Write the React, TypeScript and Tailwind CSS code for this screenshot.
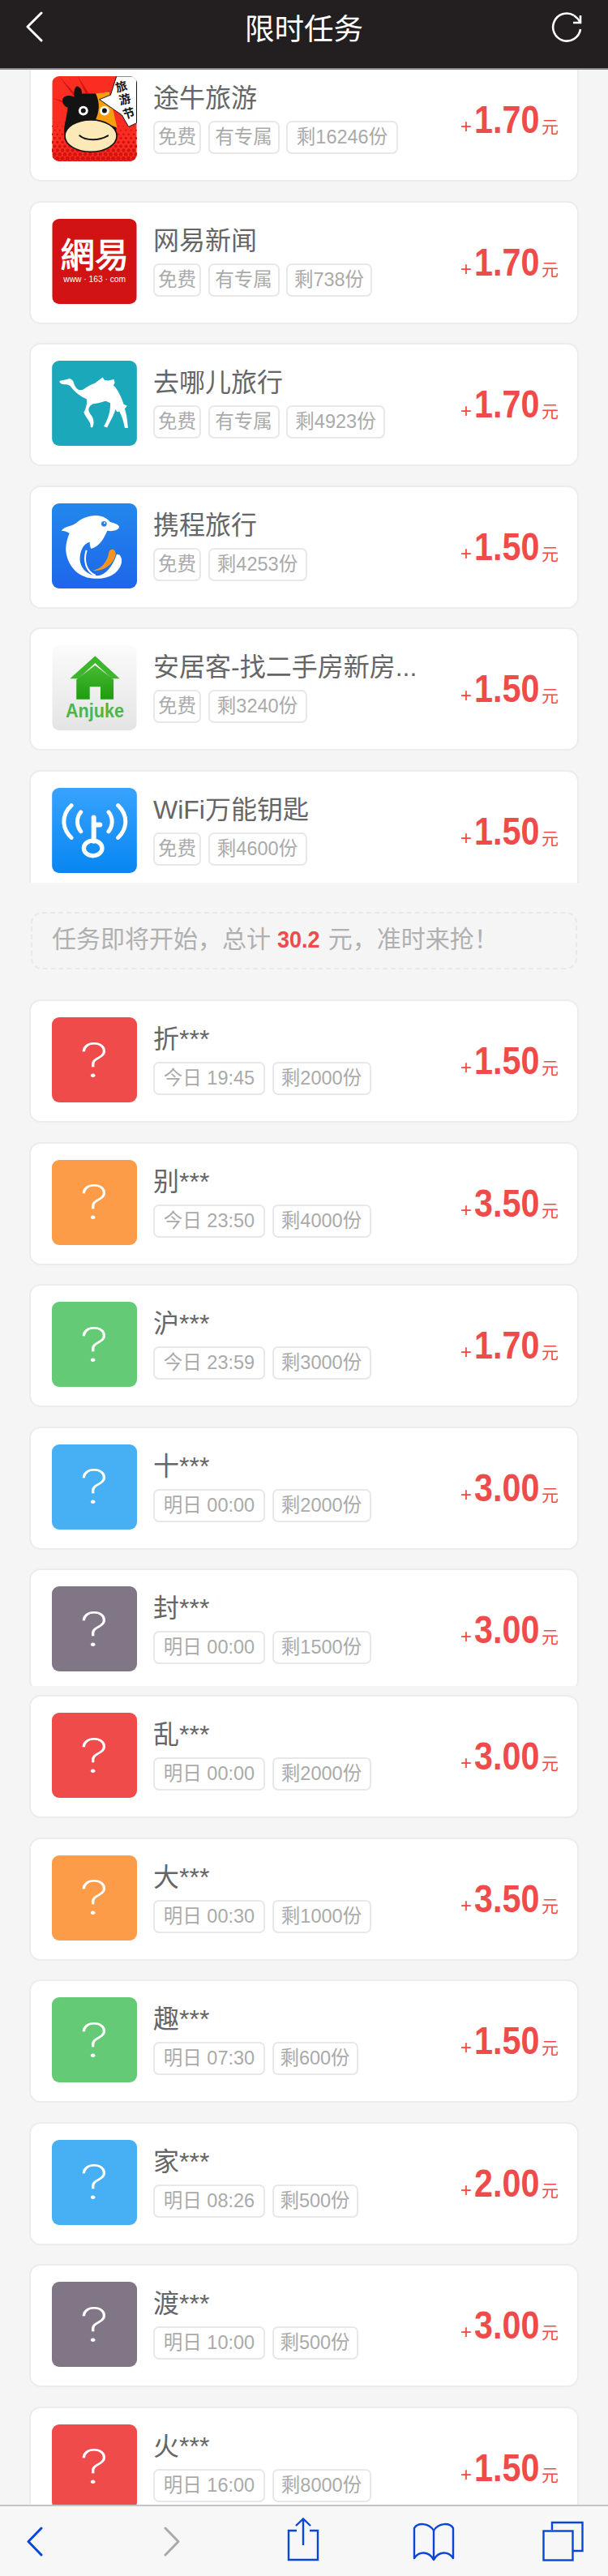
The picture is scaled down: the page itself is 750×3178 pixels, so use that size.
type Task = {
  name: string;
  logo?: string;
  color?: string;
  tags: string[];
  remain: string;
  price: string;
};

const hotTasks: Task[] = [
  { name: "途牛旅游", logo: "tuniu", tags: ["免费", "有专属"], remain: "16246", price: "1.70" },
  { name: "网易新闻", logo: "netease", tags: ["免费", "有专属"], remain: "738", price: "1.70" },
  { name: "去哪儿旅行", logo: "qunar", tags: ["免费", "有专属"], remain: "4923", price: "1.70" },
  { name: "携程旅行", logo: "ctrip", tags: ["免费"], remain: "4253", price: "1.50" },
  { name: "安居客-找二手房新房...", logo: "anjuke", tags: ["免费"], remain: "3240", price: "1.50" },
  { name: "WiFi万能钥匙", logo: "wifi", tags: ["免费"], remain: "4600", price: "1.50" },
];

const soonTasks: Task[] = [
  { name: "折***", color: "bg-[#ef4b4b]", tags: ["今日 19:45"], remain: "2000", price: "1.50" },
  { name: "别***", color: "bg-[#fd9c48]", tags: ["今日 23:50"], remain: "4000", price: "3.50" },
  { name: "沪***", color: "bg-[#65ca75]", tags: ["今日 23:59"], remain: "3000", price: "1.70" },
  { name: "十***", color: "bg-[#47aff3]", tags: ["明日 00:00"], remain: "2000", price: "3.00" },
  { name: "封***", color: "bg-[#807686]", tags: ["明日 00:00"], remain: "1500", price: "3.00" },
];

const laterTasks: Task[] = [
  { name: "乱***", color: "bg-[#ef4b4b]", tags: ["明日 00:00"], remain: "2000", price: "3.00" },
  { name: "大***", color: "bg-[#fd9c48]", tags: ["明日 00:30"], remain: "1000", price: "3.50" },
  { name: "趣***", color: "bg-[#65ca75]", tags: ["明日 07:30"], remain: "600", price: "1.50" },
  { name: "家***", color: "bg-[#47aff3]", tags: ["明日 08:26"], remain: "500", price: "2.00" },
  { name: "渡***", color: "bg-[#807686]", tags: ["明日 10:00"], remain: "500", price: "3.00" },
  { name: "火***", color: "bg-[#ef4b4b]", tags: ["明日 16:00"], remain: "8000", price: "1.50" },
];

function TuniuLogo() {
  const dots: { x: number; y: number; r: number }[] = [];
  for (let row = 0; row < 12; row++) {
    for (let col = 0; col < 18; col++) {
      const y = 200 + row * 15;
      const x = 100 + col * 19 + (row % 2) * 9;
      dots.push({ x, y, r: 1 + row * 0.7 });
    }
  }
  return (
    <svg viewBox="100 43 315 318" className="w-full h-full">
      <rect x="100" y="43" width="315" height="318" fill="#fa2d23" />
      <g fill="#d0140f">
        <path d="M125 43L200 125L190 130ZM195 43L235 105L225 108ZM100 125L150 138L148 145Z" />
        {dots.map((d, i) => (
          <circle key={i} cx={d.x} cy={d.y} r={d.r} />
        ))}
      </g>
      <path d="M192 80C208 85 212 98 210 108L290 108L312 98L340 240L300 300C280 325 190 330 165 300L145 262C140 240 150 215 158 160C140 155 130 130 145 120C160 112 175 118 182 120C180 100 182 88 192 80Z" fill="#141313" />
      <path d="M262 107L290 105L312 100L342 235L262 205C275 175 280 145 262 107Z" fill="#fb9f11" />
      <path d="M340 43L415 43L415 218L385 232L360 188L276 130L318 113Z" fill="#fff" stroke="#141313" strokeWidth="3" />
      <ellipse cx="244" cy="266" rx="97" ry="60" fill="#fde8b8" stroke="#141313" strokeWidth="5" />
      <path d="M202 265C225 285 275 285 308 265" fill="none" stroke="#141313" strokeWidth="6" strokeLinecap="round" />
      <circle cx="216" cy="172" r="18" fill="#fff" />
      <circle cx="216" cy="172" r="9" fill="#141313" />
      <circle cx="295" cy="172" r="18" fill="#fff" />
      <circle cx="295" cy="172" r="9" fill="#141313" />
      <g fill="#141313" fontSize="44" fontFamily="'Noto Sans CJK SC', sans-serif" fontWeight="700" textAnchor="middle">
        <text x="0" y="0" transform="translate(362 97) rotate(-15)">旅</text>
        <text x="0" y="0" transform="translate(375 145) rotate(-15)">游</text>
        <text x="0" y="0" transform="translate(390 197) rotate(-15)">节</text>
      </g>
    </svg>
  );
}

function NeteaseLogo() {
  return (
    <svg viewBox="100 30 315 318" className="w-full h-full">
      <rect x="100" y="30" width="315" height="318" fill="#d11313" />
      <text x="258" y="212" fill="#fff" stroke="#fff" strokeWidth="3" fontSize="128" textAnchor="middle" fontFamily="'Noto Sans CJK TC', sans-serif">網易</text>
      <text x="258" y="267" fill="#fff" fontSize="31" textAnchor="middle" fontFamily="'Liberation Sans', sans-serif">www · 163 · com</text>
    </svg>
  );
}

function QunarLogo() {
  return (
    <svg viewBox="100 48 315 316" className="w-full h-full">
      <rect x="100" y="48" width="315" height="316" fill="#1aa8ba" />
      <path d="M128 123C140 120 150 120 160 116C172 113 178 120 182 134C188 152 198 160 212 156C225 150 238 138 258 132L272 122L288 110L295 120L308 122L330 117L333 130L328 140C345 155 358 185 366 210L379 216L370 226C378 250 380 275 382 298L370 298C366 272 358 252 350 236C345 240 340 240 336 228C328 255 312 280 305 296L292 292C305 270 318 240 316 205L300 198C280 203 268 208 252 208L242 215C235 225 232 232 245 250C255 262 258 280 250 296L243 295C246 275 228 265 218 240C226 225 232 205 228 190C208 182 185 165 170 145C165 137 155 136 145 136C135 134 128 132 128 123Z" fill="#fff" />
    </svg>
  );
}

function CtripLogo() {
  return (
    <svg viewBox="100 67 315 315" className="w-full h-full">
      <defs>
        <linearGradient id="ctripBg" x1="0" y1="0" x2="0" y2="1">
          <stop offset="0" stopColor="#2288ec" />
          <stop offset="1" stopColor="#1e66ea" />
        </linearGradient>
      </defs>
      <rect x="100" y="67" width="315" height="315" fill="url(#ctripBg)" />
      <path d="M135 168C150 150 170 155 190 140C225 108 285 100 315 135C330 140 350 145 349 155C345 168 320 172 305 168C295 190 280 225 245 235C240 225 240 215 240 210C215 215 200 250 205 285C210 310 235 335 270 335C300 330 325 300 340 255C355 255 360 270 358 285C350 325 310 345 270 345C210 350 160 310 152 245C150 215 160 190 165 178C155 170 145 168 135 168Z" fill="#fff" />
      <path d="M228 240C216 280 226 320 262 334" fill="none" stroke="#fff" strokeWidth="6" />
      <path d="M312 245C318 232 338 234 336 258C325 295 290 320 250 316C285 310 305 285 312 245Z" fill="#f7941d" />
      <circle cx="293" cy="143" r="10" fill="#2a7fe2" />
      <circle cx="295" cy="140" r="3" fill="#fff" />
    </svg>
  );
}

function AnjukeLogo() {
  return (
    <svg viewBox="100 83 315 318" className="w-full h-full">
      <defs>
        <linearGradient id="anjukeBg" x1="0" y1="0" x2="0" y2="1">
          <stop offset="0" stopColor="#fbfbfb" />
          <stop offset="1" stopColor="#e4e4e4" />
        </linearGradient>
        <linearGradient id="anjukeHouse" x1="0" y1="0" x2="0" y2="1">
          <stop offset="0" stopColor="#45bb33" />
          <stop offset="1" stopColor="#1f9c10" />
        </linearGradient>
      </defs>
      <rect x="100" y="83" width="315" height="318" fill="url(#anjukeBg)" />
      <path d="M260 123L352 208L322 208L260 150L198 208L166 208Z" fill="#3db52d" />
      <path d="M260 158L329 212L329 285L280 285L280 238L240 238L240 285L190 285L190 212Z" fill="url(#anjukeHouse)" />
      <text x="150" y="352" fill="#4cb748" fontSize="74" fontWeight="700" textLength="218" lengthAdjust="spacingAndGlyphs" fontFamily="'Liberation Sans', sans-serif">Anjuke</text>
    </svg>
  );
}

function WifiLogo() {
  return (
    <svg viewBox="100 70 315 316" className="w-full h-full">
      <defs>
        <linearGradient id="wifiBg" x1="0" y1="0" x2="0" y2="1">
          <stop offset="0" stopColor="#38a3fe" />
          <stop offset="1" stopColor="#0786f2" />
        </linearGradient>
      </defs>
      <rect x="100" y="70" width="315" height="316" fill="url(#wifiBg)" />
      <g fill="none" stroke="#fff" strokeWidth="15" strokeLinecap="round">
        <path d="M172 135C135 170 135 220 172 255" />
        <path d="M207 160C190 180 190 210 207 232" />
        <path d="M345 135C382 170 382 220 345 255" />
        <path d="M310 160C327 180 327 210 310 232" />
        <path d="M255 180L255 268M255 207L278 207" strokeWidth="18" />
        <ellipse cx="252" cy="294" rx="34" ry="28" strokeWidth="16" />
      </g>
    </svg>
  );
}

function AppLogo({ logo }: { logo: string }) {
  if (logo === "tuniu") return <TuniuLogo />;
  if (logo === "netease") return <NeteaseLogo />;
  if (logo === "qunar") return <QunarLogo />;
  if (logo === "ctrip") return <CtripLogo />;
  if (logo === "anjuke") return <AnjukeLogo />;
  return <WifiLogo />;
}

function Tag({ text, width }: { text: string; width: number }) {
  return (
    <span
      className="flex h-[41px] items-center justify-center rounded-[7px] border-2 border-[#e8e8e8] pt-[1px] text-[23.5px] leading-none text-[#aaaaaa] whitespace-nowrap"
      style={{ width }}
    >
      {text}
    </span>
  );
}

function tagWidth(text: string) {
  if (text === "免费") return 59;
  if (text === "有专属") return 88;
  return 138;
}

function TaskCard({ task }: { task: Task }) {
  return (
    <div className="mb-[23.5px] flex h-[152px] rounded-[14px] border-2 border-[#ececec] bg-white pl-[26px] pr-[23px] pt-[20px]">
      <div className={`flex h-[105px] w-[105px] shrink-0 items-center justify-center overflow-hidden rounded-[9px] ${task.color ?? ""}`}>
        {task.logo ? (
          <AppLogo logo={task.logo} />
        ) : (
          <span className="inline-block scale-x-[1.25] font-['Inter',sans-serif] text-[58px] font-extralight leading-none text-white">?</span>
        )}
      </div>
      <div className="ml-[20px] flex-1 pt-[7px]">
        <div className="h-[40px] whitespace-nowrap text-[32px] leading-[40px] text-[#666666]">{task.name}</div>
        <div className="mt-[8px] flex gap-[8.5px]">
          {task.tags.map((t) => (
            <Tag key={t} text={t} width={tagWidth(t)} />
          ))}
          <Tag text={`剩${task.remain}份`} width={58 + task.remain.length * 16} />
        </div>
      </div>
      <div className="-mt-[20px] flex shrink-0 items-baseline self-center text-[#ef4b4b]">
        <span className="mr-[3px] text-[24px] leading-none">+</span>
        <span className="inline-block w-[79px] origin-left scale-x-[0.86] text-[48px] font-bold leading-none">{task.price}</span>
        <span className="ml-[4px] text-[21px] leading-none">元</span>
      </div>
    </div>
  );
}

export default function App() {
  return (
    <div className="relative h-[3178px] w-[750px] overflow-hidden bg-[#f5f5f5] font-['Liberation_Sans','Noto_Sans_CJK_SC',sans-serif]">
      {/* top bar */}
      <header className="absolute left-0 top-0 z-10 flex h-[86px] w-full items-start justify-between border-b-2 border-[#8a8a8a] bg-[#231f20] pl-[32px] pr-[32px] pt-[14px] text-white">
        <div className="w-[38px]">
          <svg width="21" height="38" viewBox="0 0 21 38" fill="none" stroke="#fff" strokeWidth="3" strokeLinecap="round" strokeLinejoin="round">
            <path d="M19 2L2 19L19 36" />
          </svg>
        </div>
        <span className="mt-[3px] text-[36.5px] font-normal leading-[40px]">限时任务</span>
        <svg width="38" height="38" viewBox="0 0 38 38" fill="none" stroke="#fff" strokeWidth="2.6">
          <path d="M36 22A17 17 0 1 1 28 5" />
          <path d="M36 5L36 14L27 14" strokeLinejoin="miter" />
          <path d="M28 5C31 7 34 10 36 14" />
        </svg>
      </header>

      <main className="px-[36px] pt-[72px]">
        <section className="h-[1017px] overflow-hidden">
          {hotTasks.map((t) => (
            <TaskCard key={t.name} task={t} />
          ))}
        </section>

        <div className="mx-[2px] mb-[37px] mt-[36px] flex h-[71px] items-center whitespace-pre rounded-[14px] border-2 border-dashed border-[#e8e8e8] pb-[4px] pl-[24px] text-[30px] text-[#b0b0b0]">
          任务即将开始，总计 <span className="inline-block w-[54px] origin-left scale-x-[0.9] font-bold text-[#ef4b4b]">30.2</span> 元，准时来抢！
        </div>

        <section className="h-[847px] overflow-hidden">
          {soonTasks.map((t) => (
            <TaskCard key={t.name} task={t} />
          ))}
        </section>

        <section className="mt-[11px]">
          {laterTasks.map((t) => (
            <TaskCard key={t.name} task={t} />
          ))}
        </section>
      </main>

      {/* safari toolbar */}
      <footer className="absolute bottom-0 left-0 z-10 flex h-[88px] w-full border-t-2 border-[#c4c4c4] bg-[#f7f7f7]">
        <svg className="ml-[33px] mt-[25px]" width="20" height="37" viewBox="0 0 20 37" fill="none" stroke="#0a46d8" strokeWidth="3" strokeLinecap="round" strokeLinejoin="round">
          <path d="M18 2L2 18.5L18 35" />
        </svg>
        <svg className="ml-[149px] mt-[25px]" width="20" height="37" viewBox="0 0 20 37" fill="none" stroke="#aaaaaa" strokeWidth="3" strokeLinecap="round" strokeLinejoin="round">
          <path d="M2 2L18 18.5L2 35" />
        </svg>
        <svg className="ml-[131.5px] mt-[14px]" width="40" height="54" viewBox="0 0 40 54" fill="none" stroke="#0a46d8" strokeWidth="2.4">
          <path d="M12 16L2 16L2 52L38 52L38 16L28 16" />
          <path d="M20 2L20 34M11 10L20 1.5L29 10" />
        </svg>
        <svg className="ml-[115px] mt-[19px]" width="52" height="49" viewBox="0 0 52 49" fill="none" stroke="#0a46d8" strokeWidth="2.4" strokeLinejoin="round">
          <path d="M26 11C20 1 6 1 2 8L2 45C8 36 20 36 26 47C32 36 44 36 50 45L50 8C46 1 32 1 26 11Z" />
          <path d="M26 11L26 47" />
        </svg>
        <svg className="ml-[108px] mt-[18px]" width="51" height="50" viewBox="0 0 51 50" fill="none" stroke="#0a46d8" strokeWidth="2.4">
          <path d="M12 11L12 2L49.5 2L49.5 37L38 37" />
          <rect x="1.5" y="12.5" width="36" height="36" />
        </svg>
      </footer>
    </div>
  );
}
